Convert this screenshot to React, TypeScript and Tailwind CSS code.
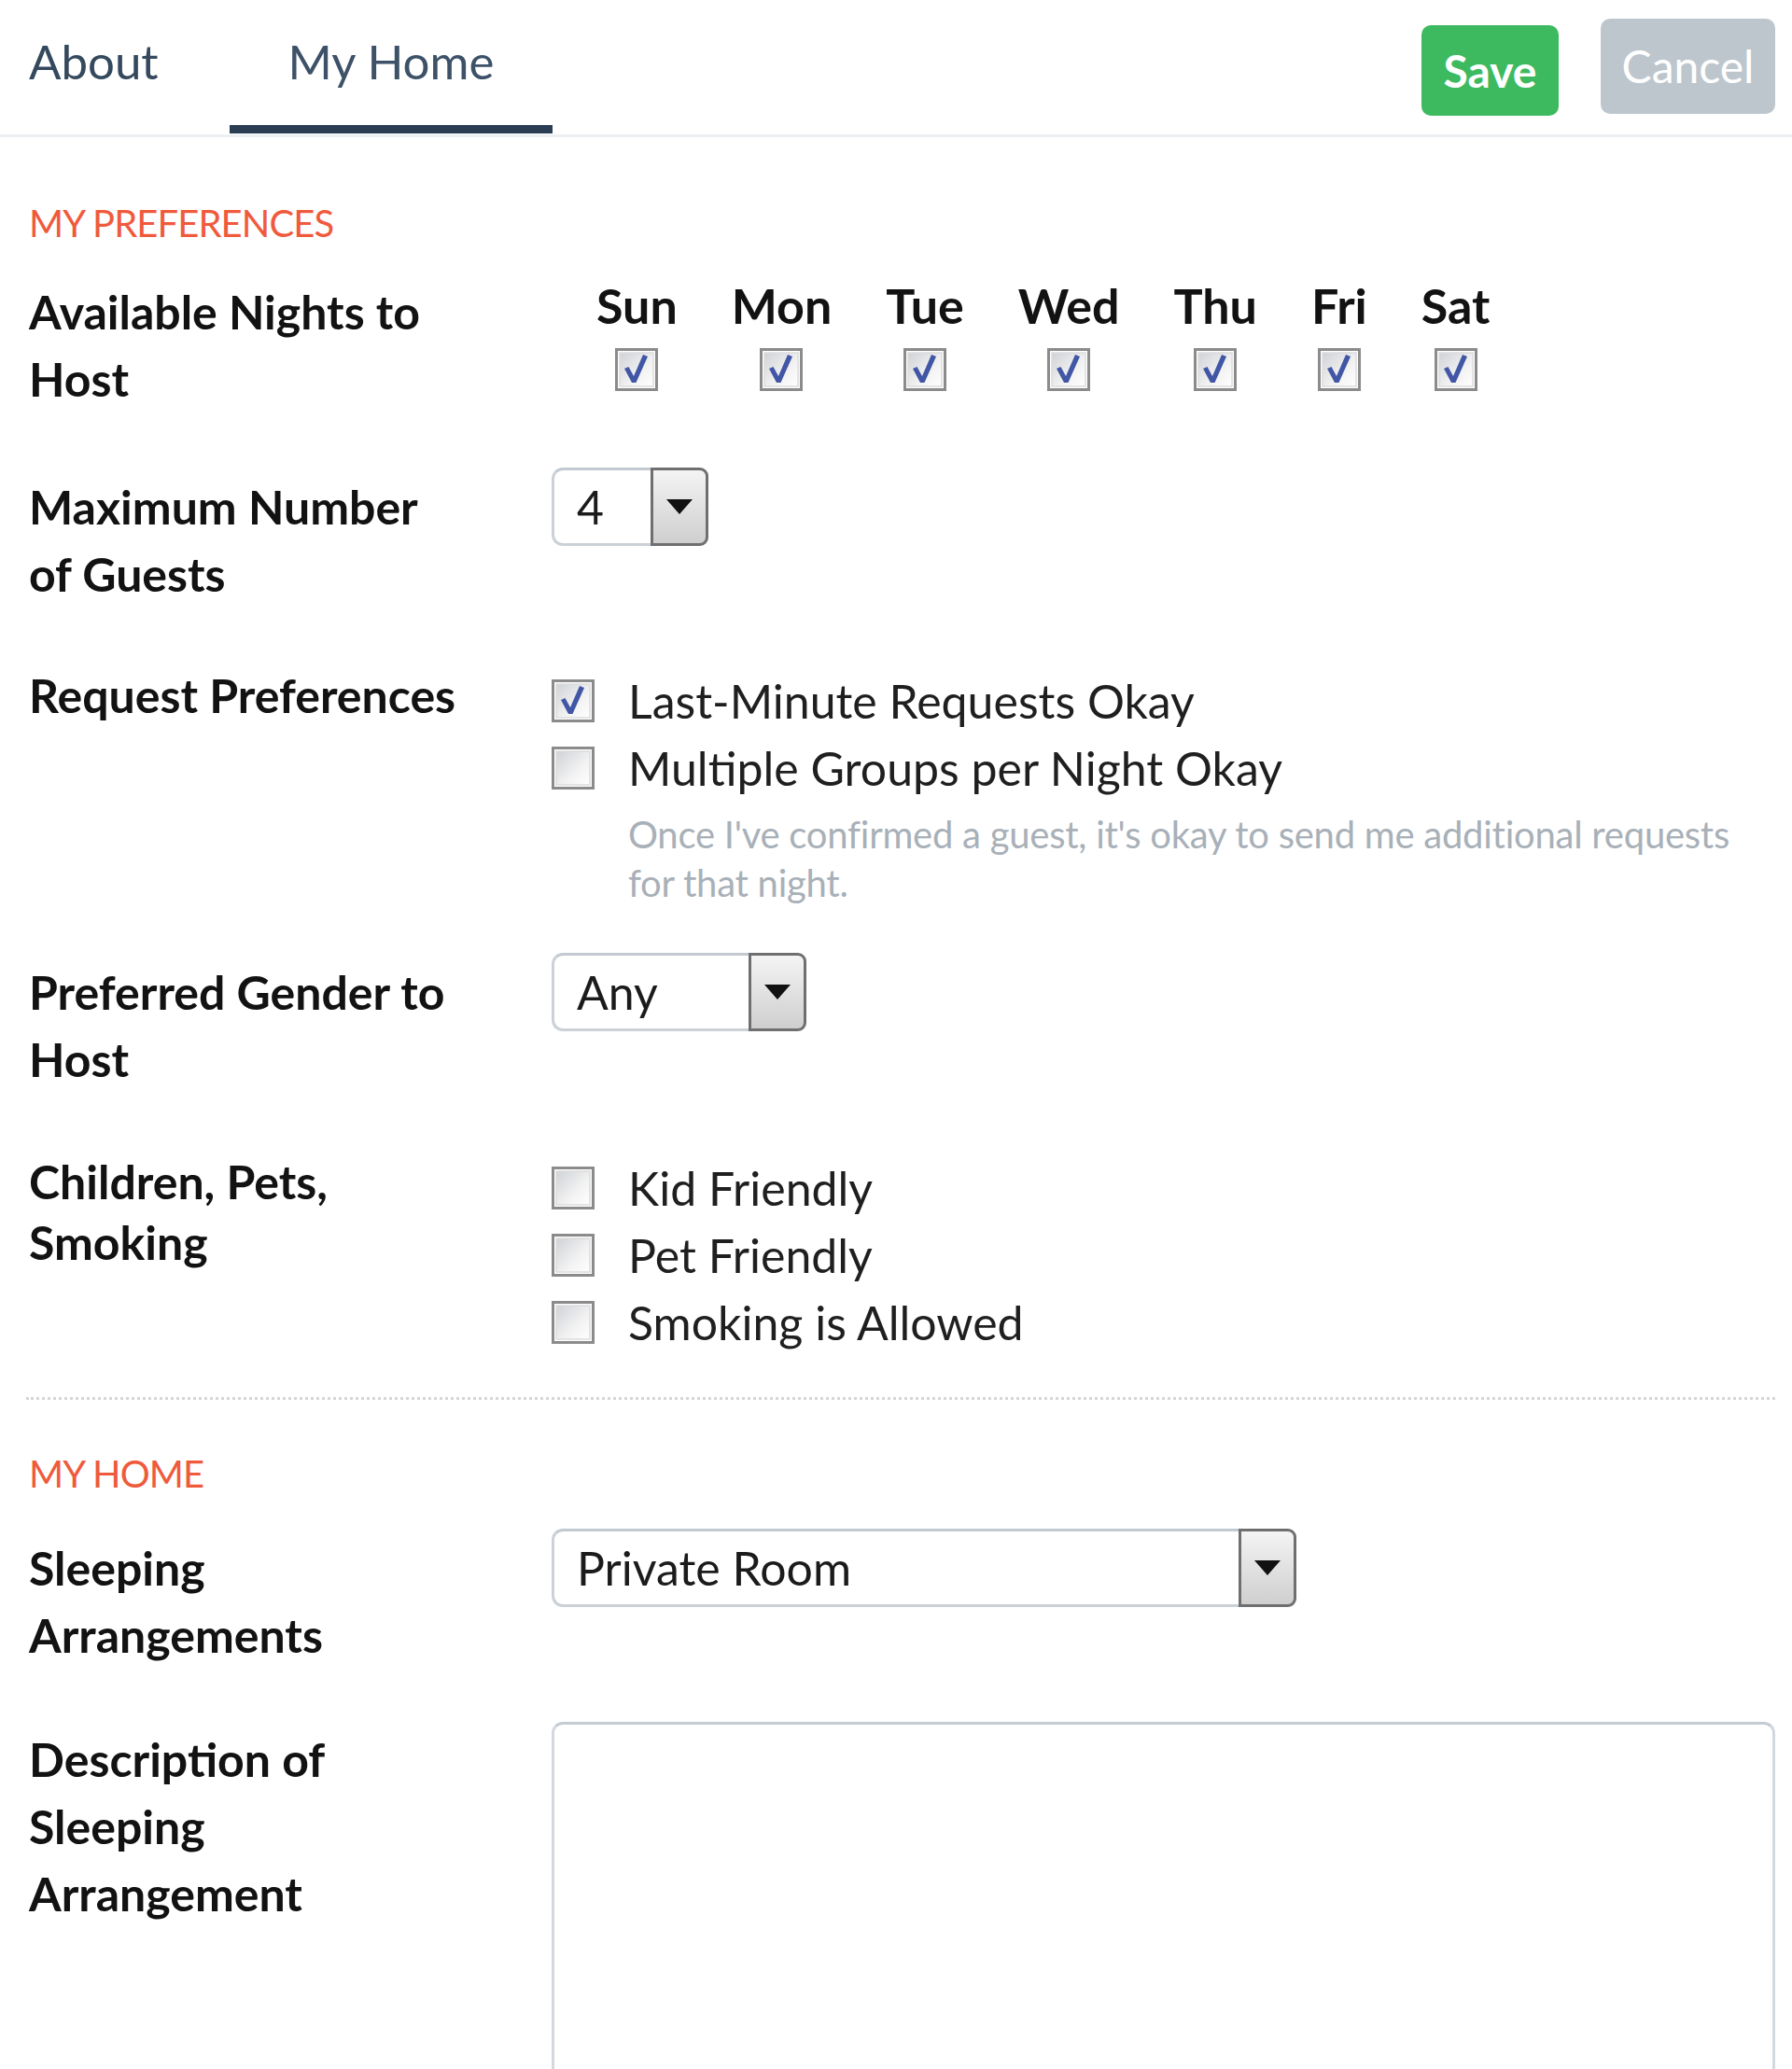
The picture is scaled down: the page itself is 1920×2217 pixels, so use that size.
import type { ReactNode } from "react";

const DAYS = ["Sun", "Mon", "Tue", "Wed", "Thu", "Fri", "Sat"];

/** Caixa de seleção no estilo antigo do navegador. */
function Checkbox({ checked = false }: { checked?: boolean }) {
  const id = checked ? "cbg-on" : "cbg-off";
  return (
    <svg width="46" height="46" viewBox="0 0 46 46" className="shrink-0">
      <defs>
        <linearGradient id={id} x1="0" y1="0" x2="1" y2="1">
          <stop offset="0" stopColor="#cfd2d7" />
          <stop offset="0.6" stopColor="#f2f2f2" />
          <stop offset="1" stopColor="#ffffff" />
        </linearGradient>
      </defs>
      <rect x="1.5" y="1.5" width="43" height="43" fill="#fff" stroke="#8b8b8b" strokeWidth="3" />
      <rect x="5" y="5" width="36" height="36" fill={`url(#${id})`} stroke="#dcdcdc" strokeWidth="1.5" />
      {checked && <polygon points="10,22 14.5,20 20,30 30,7 35,9 22.5,37 18,37" fill="#4256a6" />}
    </svg>
  );
}

function Select({ value, width }: { value: string; width: string }) {
  return (
    <div className={"flex h-[84px] " + width}>
      <div className="flex flex-1 items-center rounded-l-[12px] border-[3px] border-r-0 border-[#cbd1d7] border-t-[#c2c9d0] pl-[24px] text-[50px] text-[#1b1b1b]">
        {value}
      </div>
      <div className="flex w-[62px] items-center justify-center rounded-r-[9px] border-[3px] border-[#6f6f6f] bg-gradient-to-b from-[#f4f4f4] to-[#cfcfcf]">
        <svg width="30" height="18" viewBox="0 0 30 18">
          <polygon points="1,1 29,1 15,17" fill="#111" />
        </svg>
      </div>
    </div>
  );
}

function Option({ label, checked }: { label: string; checked?: boolean }) {
  return (
    <div className="flex h-[72px] items-center gap-[36px]">
      <Checkbox checked={checked} />
      <span className="text-[50px] leading-[72px] text-[#1f1f1f]">{label}</span>
    </div>
  );
}

function Row({
  label,
  children,
  className = "",
  leading = "leading-[72px]",
}: {
  label: ReactNode;
  children: ReactNode;
  className?: string;
  leading?: string;
}) {
  return (
    <div className={"grid grid-cols-[560px_1fr] " + className}>
      <div className={"text-[50px] font-bold text-[#121212] " + leading}>{label}</div>
      <div>{children}</div>
    </div>
  );
}

function SectionTitle({ children, className = "" }: { children: ReactNode; className?: string }) {
  return (
    <h2 className={"text-[40px] leading-[48px] tracking-[-0.9px] text-[#f05a3c] " + className}>{children}</h2>
  );
}

export default function App() {
  return (
    <div className="h-[2217px] overflow-hidden bg-white font-['Lato','Liberation_Sans',sans-serif]">
      {/* abas + ações */}
      <div className="flex h-[147px] items-start justify-between border-b-[3px] border-[#edf0f3]">
        <div className="flex h-full">
          <div className="flex w-[246px] flex-col pl-[31px] pt-[38px]">
            <span className="text-[51px] leading-[56px] text-[#34495e]">About</span>
          </div>
          <div className="flex w-[346px] flex-col items-center justify-between pt-[38px]">
            <span className="text-[51px] leading-[56px] text-[#3d5168]">My Home</span>
            <div className="mb-[1px] h-[9px] w-full bg-[#2a3d52]" />
          </div>
        </div>
        <div className="flex gap-[45px] pr-[18px]">
          <button className="mt-[27px] h-[97px] w-[147px] rounded-[10px] bg-[#3dba60] text-[48px] font-bold text-white">
            Save
          </button>
          <button className="mt-[20px] h-[102px] w-[187px] rounded-[10px] bg-[#bec6cd] text-[48px] text-white">
            Cancel
          </button>
        </div>
      </div>

      <div className="pl-[31px] pr-[18px]">
        <SectionTitle className="mt-[68px]">MY PREFERENCES</SectionTitle>

        <Row label={<>Available Nights to<br />Host</>} className="mt-[35px]">
          <div className="ml-[19px] flex">
            {DAYS.map((d) => (
              <div key={d} className="flex flex-col items-center px-[29px]">
                <span className="text-[52px] font-bold leading-[58px] text-[#121212]">{d}</span>
                <div className="mt-[17px]">
                  <Checkbox checked />
                </div>
              </div>
            ))}
          </div>
        </Row>

        <Row label={<>Maximum Number<br />of Guests</>} className="mt-[65px]">
          <div className="flex h-[72px] items-center">
            <Select value="4" width="w-[168px]" />
          </div>
        </Row>

        <Row label="Request Preferences" className="mt-[58px]">
          <div className="mt-[6px]">
            <Option label="Last-Minute Requests Okay" checked />
            <Option label="Multiple Groups per Night Okay" />
            <p className="mt-[9px] pl-[82px] text-[40px] leading-[52px] tracking-[-0.25px] text-[#a8b0b8]">
              Once I've confirmed a guest, it's okay to send me additional requests
              <br />
              for that night.
            </p>
          </div>
        </Row>

        <Row label={<>Preferred Gender to<br />Host</>} className="mt-[55px]">
          <div className="flex h-[72px] items-center">
            <Select value="Any" width="w-[273px]" />
          </div>
        </Row>

        <Row label={<>Children, Pets,<br />Smoking</>} className="mt-[63px]" leading="leading-[65px]">
          <div className="mt-[3px]">
            <Option label="Kid Friendly" />
            <Option label="Pet Friendly" />
            <Option label="Smoking is Allowed" />
          </div>
        </Row>

        <div className="-ml-[3px] mt-[44px] border-t-[3px] border-dotted border-[#d6d6d6]" />

        <SectionTitle className="mt-[55px]">MY HOME</SectionTitle>

        <Row label={<>Sleeping<br />Arrangements</>} className="mt-[41px]">
          <div className="flex h-[72px] items-center">
            <Select value="Private Room" width="w-[798px]" />
          </div>
        </Row>

        <Row label={<>Description of<br />Sleeping<br />Arrangement</>} className="mt-[61px]">
          <textarea className="-mt-[4px] h-[460px] w-full resize-none rounded-[12px] border-[3px] border-[#d2d8de] border-t-[#c4cbd2] outline-none" />
        </Row>
      </div>
    </div>
  );
}
